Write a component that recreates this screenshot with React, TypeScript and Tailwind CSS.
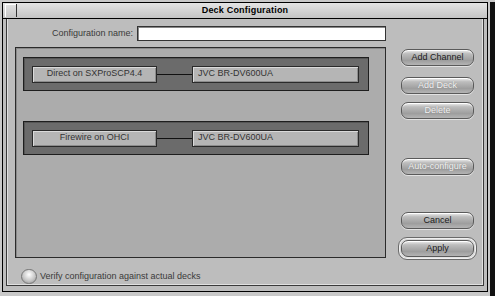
import React from 'react';

// Deck configuration dialog (classic Mac look)

interface DeckRow {
    channel: string;
    deck: string;
}

const rows: DeckRow[] = [
    { channel: 'Direct on SXProSCP4.4', deck: 'JVC BR-DV600UA' },
    { channel: 'Firewire on OHCI', deck: 'JVC BR-DV600UA' },
];

const PillButton: React.FC<{ label: string; disabled?: boolean }> = ({ label, disabled }) => (
    <div
        className={
            'w-[73px] h-[17px] rounded-[7px] border border-[#5a5a5a] flex items-center justify-center text-[9px] leading-none ' +
            'bg-[linear-gradient(to_bottom,#f0f0f0_0%,#bdbdbd_25%,#9e9e9e_70%,#b4b4b4_100%)] shadow-[inset_0_1px_0_#ffffff,0_1px_0_#e2e2e2] ' +
            (disabled ? 'text-[#f4f4f4] [text-shadow:0_0_1px_#7a7a7a]' : 'text-[#1a1a1a]')
        }
    >
        {label}
    </div>
);

const Cell: React.FC<{ text: string; center?: boolean; width: string }> = ({ text, center, width }) => (
    <div
        className={
            width +
            ' h-[17px] bg-[#b5b5b5] border border-[#2a2a2a] shadow-[inset_1px_1px_0_#dadada,inset_-1px_-1px_0_#8c8c8c] flex items-center text-[9px] text-[#333] ' +
            (center ? 'justify-center' : 'pl-[5px]')
        }
    >
        {text}
    </div>
);

export default function App() {
    return (
        <div
            className="w-[495px] h-[296px] bg-[#c9c9c9] flex pl-[2px] pt-[2px] overflow-hidden"
            style={{ fontFamily: '"Liberation Sans", Arial, sans-serif' }}
        >
            {/* window */}
            <div className="w-[486px] h-[290px] border border-black bg-[#bdbdbd] flex flex-col">
                {/* title bar */}
                <div className="h-[16px] border-b border-black bg-[linear-gradient(to_bottom,#e4e4e4,#c4c4c4)] flex items-center relative">
                    <div className="ml-[2px] w-[12px] h-[13px] border-r border-[#333] shadow-[inset_1px_1px_0_#fff]" />
                    <div className="absolute inset-0 flex items-center justify-center text-[9px] font-bold text-black tracking-[0.2px]">
                        Deck Configuration
                    </div>
                </div>

                {/* body frame */}
                <div className="flex-1 mx-[3px] mb-[5px] border-x border-b border-[#3a3a3a] shadow-[inset_1px_0_0_#e0e0e0,inset_-1px_-1px_0_#e0e0e0] flex flex-col pl-[8px] pt-[7px]">
                    <div className="flex items-center h-[15px]">
                        <div className="w-[118px] mr-[4px] text-right text-[9px] text-[#3a3a3a]">Configuration name:</div>
                        <div className="w-[249px] h-[15px] bg-white border border-[#333] shadow-[inset_1px_1px_0_#888]" />
                    </div>

                    <div className="flex mt-[6px]">
                        {/* deck list */}
                        <div className="w-[371px] h-[211px] border border-[#2b2b2b] bg-[#acacac] shadow-[inset_1px_1px_0_#8a8a8a] flex flex-col pt-[9px] pl-[7px] gap-[30px]">
                            {rows.map((r) => (
                                <div
                                    key={r.channel}
                                    className="w-[346px] h-[34px] bg-[#6b6b6b] border border-[#1e1e1e] shadow-[inset_1px_1px_0_#555] flex items-center pl-[8px]"
                                >
                                    <Cell text={r.channel} center width="w-[125px]" />
                                    <div className="w-[35px] h-px bg-[#111]" />
                                    <Cell text={r.deck} width="w-[167px]" />
                                </div>
                            ))}
                        </div>

                        {/* buttons */}
                        <div className="ml-[15px] flex flex-col pt-[2px]">
                            <PillButton label="Add Channel" />
                            <div className="mt-[11px]"><PillButton label="Add Deck" disabled /></div>
                            <div className="mt-[8px]"><PillButton label="Delete" disabled /></div>
                            <div className="mt-[39px]"><PillButton label="Auto-configure" disabled /></div>
                            <div className="mt-[37px]"><PillButton label="Cancel" /></div>
                            <div className="mt-[8px] -ml-[3px] w-[79px] h-[23px] rounded-[9px] border border-[#6a6a6a] bg-[#d6d6d6] shadow-[inset_0_0_0_1px_#f0f0f0] flex items-center justify-center">
                                <PillButton label="Apply" />
                            </div>
                        </div>
                    </div>

                    <div className="flex items-center mt-[9px] ml-[6px]">
                        <div className="w-[16px] h-[15px] rounded-full border border-[#777] bg-[radial-gradient(circle_at_50%_35%,#ffffff,#c8c8c8_55%,#8d8d8d)]" />
                        <div className="ml-[3px] text-[9px] text-[#3a3a3a]">Verify configuration against actual decks</div>
                    </div>
                </div>
            </div>
            <div className="w-[2px]" />
            <div className="flex-1 bg-[#111]" />
        </div>
    );
}
